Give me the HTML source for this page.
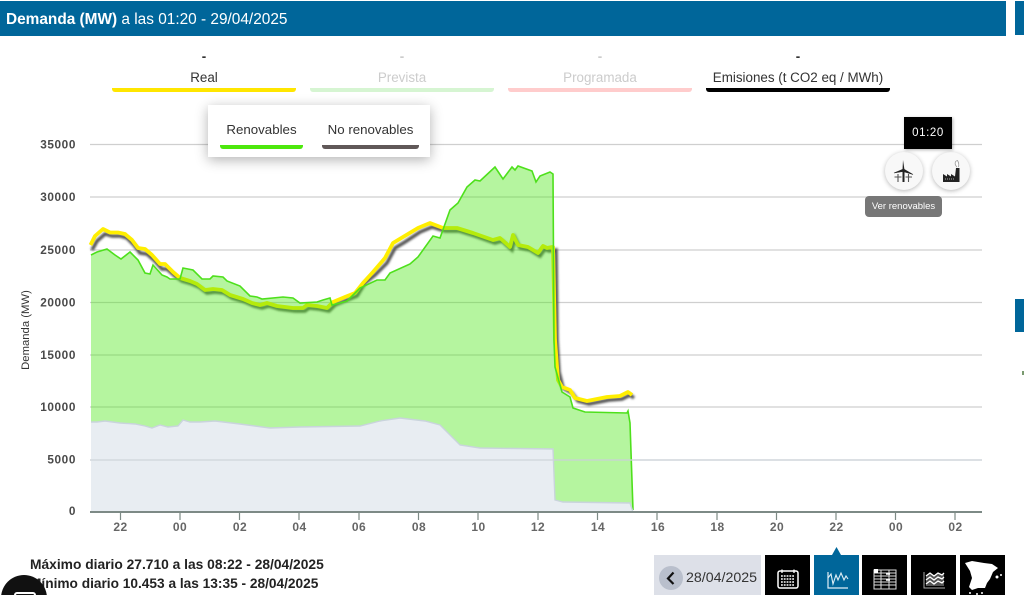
<!DOCTYPE html>
<html><head><meta charset="utf-8">
<style>
html,body{margin:0;padding:0;background:#fff;width:1024px;height:595px;overflow:hidden;font-family:"Liberation Sans",sans-serif}
#w{position:relative;width:1024px;height:595px;overflow:hidden;background:#fff}
.a{position:absolute}
.lg{position:absolute;text-align:center;font-size:13.4px;color:#333;top:70px;width:184px}
.bar{position:absolute;top:88px;height:3.5px;width:184px;border-radius:0 0 3px 3px}
.btn{position:absolute;top:555px;width:45px;height:40px;background:#000}
</style></head><body><div id="w">
<div class="a" style="left:0;top:1px;width:1006px;height:35px;background:#00669a;color:#fff;font-size:15.4px;line-height:37px;text-indent:6px;white-space:nowrap"><b>Demanda (MW)</b> a las 01:20 - 29/04/2025</div>
<div class="a" style="left:1015px;top:1px;width:9px;height:34px;background:#00669a"></div>
<div class="a" style="left:1015px;top:299px;width:9px;height:33px;background:#00669a"></div>
<div class="a" style="left:1022px;top:371px;width:2px;height:4px;background:#7a9a70"></div>

<div class="lg" style="left:112px;top:49px;color:#333;font-weight:bold">-</div>
<div class="lg" style="left:310px;top:49px;color:#ccc;font-weight:bold">-</div>
<div class="lg" style="left:508px;top:49px;color:#ccc;font-weight:bold">-</div>
<div class="lg" style="left:706px;top:49px;color:#333;font-weight:bold">-</div>
<div class="lg" style="left:112px">Real</div>
<div class="lg" style="left:310px;color:#ccc">Prevista</div>
<div class="lg" style="left:508px;color:#ccc">Programada</div>
<div class="lg" style="left:706px">Emisiones (t CO2 eq / MWh)</div>
<div class="bar" style="left:112px;background:#ffe600"></div>
<div class="bar" style="left:310px;background:#d6f5d2"></div>
<div class="bar" style="left:508px;background:#ffcccc"></div>
<div class="bar" style="left:706px;background:#000"></div>

<svg class="a" style="left:0;top:0" width="1024" height="595" viewBox="0 0 1024 595">
<defs><filter id="b" x="-5%" y="-5%" width="110%" height="110%"><feGaussianBlur stdDeviation="1"/></filter></defs>
<g stroke="#cfcfcf" stroke-width="1.3">
<line x1="90" x2="982" y1="144.5" y2="144.5"/><line x1="90" x2="982" y1="197" y2="197"/><line x1="90" x2="982" y1="250" y2="250"/><line x1="90" x2="982" y1="302.5" y2="302.5"/><line x1="90" x2="982" y1="355" y2="355"/><line x1="90" x2="982" y1="407" y2="407"/><line x1="90" x2="982" y1="460" y2="460"/>
</g>
<polyline filter="url(#b)" fill="none" stroke="#555" stroke-width="3.5" points="92,250 97,241 105,234 112,236 120,236 127,238 134,245 140,253 147,254 154,260 162,269 167,269 175,276 182,281 192,284 199,287 207,293 215,292 224,293 232,298 245,302 254,306 262,308 269,306 279,309 295,311 305,311 309,308 319,309 329,311 335,305 347,300 357,296 365,283 375,275 387,263 395,248 405,242 420,232 432,227 445,231 459,231 475,236 495,243 502,241 512,250 515,238 520,248 530,250 540,256 545,249 549,251 556,250 557,340 559,372 563,388 572,393 578,401 589,404 609,400 622,399 630,395 634,398"/>
<polyline fill="none" stroke="#ffee00" stroke-width="3.8" stroke-linejoin="round" points="90.5,245 95,236 103,229 110,232.5 118,232.5 125,234 132,240 138,248 145,249 152,255 160,264 165,264 173,272 180,278 190,281 197,284 205,290 213,289 222,290 230,295 243,299 252,303 260,305 267,303 277,306 293,308 303,308 307,305 317,306 327,308 333,302 345,297 355,293 363,283 373,272 385,258 393,243 403,237 418,228 430,223 443,228 457,228 473,233 493,240 500,238 510,247 513,235 518,245 528,247 538,253 543,246 547,248 552,247 553,247 555,340 558,380 562,387 570,390 575,398 587,401 607,397 620,396 628,392 632,395"/>
<path fill="#4ee81a" fill-opacity=".42" d="M91,255 97,252 107,249 115,255 121,259 130,252 138,260 145,273 150,274 153,265 162,275 167,277 170,279 180,279 183,268 193,270 202,279 210,279 213,276 223,277 227,281 240,286 250,296 257,297 262,299 283,297 293,298 300,303 317,302 323,300 330,298 332,305 347,301 360,288 377,280 385,280 390,273 410,264 418,257 433,236 440,238 450,210 458,203 467,187 475,180 480,181 495,167 503,179 512,167 515,170 518,166 532,171 536,182 540,176 550,172 553,174 554,340 555,367 562,392 570,397 573,408 585,412 627,413 628,411 630,423 633,510 633,512 91,512Z"/>
<polyline fill="none" stroke="#4ee01c" stroke-width="1.6" points="91,255 97,252 107,249 115,255 121,259 130,252 138,260 145,273 150,274 153,265 162,275 167,277 170,279 180,279 183,268 193,270 202,279 210,279 213,276 223,277 227,281 240,286 250,296 257,297 262,299 283,297 293,298 300,303 317,302 323,300 330,298 332,305 347,301 360,288 377,280 385,280 390,273 410,264 418,257 433,236 440,238 450,210 458,203 467,187 475,180 480,181 495,167 503,179 512,167 515,170 518,166 532,171 536,182 540,176 550,172 553,174 554,340 555,367 562,392 570,397 573,408 585,412 627,413 628,411 630,423 633,510"/>
<path fill="#e8edf2" stroke="none" d="M91,422 97,422 105,421 120,423 135,424 145,426 152,428 160,425 168,427 178,426 183,420 190,422 200,422 215,421 240,424 270,428 300,427 360,426 380,421 400,418 425,421 440,425 450,435 460,445 480,448 553,449 555,500 563,502 630,503 633,512 91,512Z"/>
<polyline fill="none" stroke="#c9d4dc" stroke-width="1.4" points="91,422 97,422 105,421 120,423 135,424 145,426 152,428 160,425 168,427 178,426 183,420 190,422 200,422 215,421 240,424 270,428 300,427 360,426 380,421 400,418 425,421 440,425 450,435 460,445 480,448 553,449 555,500 563,502 630,503 633,512"/>
<line x1="90" x2="982" y1="460" y2="460" stroke="#cfd5da" stroke-width="1.2"/>
<line x1="90" x2="982" y1="512" y2="512" stroke="#7d8a86" stroke-width="2"/>
<g stroke="#7d8a86" stroke-width="1.2">
<line x1="120.5" x2="120.5" y1="512" y2="520"/><line x1="180" x2="180" y1="512" y2="520"/><line x1="239.5" x2="239.5" y1="512" y2="520"/><line x1="299" x2="299" y1="512" y2="520"/><line x1="359" x2="359" y1="512" y2="520"/><line x1="418.5" x2="418.5" y1="512" y2="520"/><line x1="478" x2="478" y1="512" y2="520"/><line x1="538" x2="538" y1="512" y2="520"/><line x1="597.5" x2="597.5" y1="512" y2="520"/><line x1="657" x2="657" y1="512" y2="520"/><line x1="717" x2="717" y1="512" y2="520"/><line x1="776.5" x2="776.5" y1="512" y2="520"/><line x1="836" x2="836" y1="512" y2="520"/><line x1="895.500" x2="895.500" y1="512" y2="520"/><line x1="955" x2="955" y1="512" y2="520"/>
</g>
<g font-family="Liberation Sans" font-weight="bold" font-size="11.8" letter-spacing=".6" fill="#4a4a4a" text-anchor="end">
<text x="76" y="148.500">35000</text><text x="76" y="201">30000</text><text x="76" y="254">25000</text><text x="76" y="306.500">20000</text><text x="76" y="359">15000</text><text x="76" y="411">10000</text><text x="76" y="463.500">5000</text><text x="76" y="515">0</text>
</g>
<g font-family="Liberation Sans" font-weight="bold" font-size="12" letter-spacing=".5" fill="#666" text-anchor="middle">
<text x="120.500" y="531">22</text><text x="180" y="531">00</text><text x="240" y="531">02</text><text x="299.500" y="531">04</text><text x="359" y="531">06</text><text x="419" y="531">08</text><text x="478.500" y="531">10</text><text x="538" y="531">12</text><text x="598" y="531">14</text><text x="658" y="531">16</text><text x="717.500" y="531">18</text><text x="777" y="531">20</text><text x="836.500" y="531">22</text><text x="896" y="531">00</text><text x="955.500" y="531">02</text>
</g>
<text transform="translate(29,330) rotate(-90)" font-family="Liberation Sans" font-size="11.3" fill="#333" text-anchor="middle">Demanda (MW)</text>
</svg>

<div class="a" style="left:208px;top:105px;width:222px;height:52px;background:#fff;box-shadow:0 3px 12px rgba(0,0,0,.3)"></div>
<div class="a" style="left:220px;top:122px;width:83px;text-align:center;font-size:13.3px;color:#333;white-space:nowrap">Renovables</div>
<div class="a" style="left:322px;top:122px;width:97px;text-align:center;font-size:13.3px;color:#333;white-space:nowrap">No renovables</div>
<div class="a" style="left:220px;top:145px;width:83px;height:3.5px;background:#4de80d;border-radius:0 0 3px 3px"></div>
<div class="a" style="left:322px;top:145px;width:97px;height:3.5px;background:#605858;border-radius:0 0 3px 3px"></div>

<div class="a" style="left:885px;top:152px;width:38px;height:38px;border-radius:50%;background:#f8f8f8;box-shadow:0 1px 5px rgba(0,0,0,.28)"></div>
<div class="a" style="left:932px;top:152px;width:38px;height:38px;border-radius:50%;background:#f8f8f8;box-shadow:0 1px 5px rgba(0,0,0,.28)"></div>
<div class="a" style="left:904px;top:117px;width:48px;height:32px;background:#000;color:#fff;font-size:11.5px;line-height:32px;text-align:center;letter-spacing:.6px;box-shadow:1px 1px 3px rgba(0,0,0,.3)">01:20</div>
<svg class="a" style="left:885px;top:152px" width="85" height="38" viewBox="885 152 85 38">
<path d="M903 160 904.500 170 904.500 182 902.500 182 902.500 170Z" fill="#222"/>
<path d="M903.500 169 894 173 903 171.500 913 174.500Z" fill="#222" stroke="#222" stroke-width=".6"/>
<path d="M898 174V182M894.500 177H901.500M908.500 174V182M905.500 177H912" stroke="#555" stroke-width="1.100" fill="none"/>
<path d="M943 182V174L947 176.500V174L951 176.500V174L955 176.500 956 168H959.500V182Z" fill="#222"/>
<path d="M957 167C954 164 955 161 957.500 160.500 959 163 959 165 958.500 167" fill="#fff" stroke="#999" stroke-width=".8"/>
<path d="M945 179H955" stroke="#aaa" stroke-width="1" stroke-dasharray="1 1"/>
</svg>
<div class="a" style="left:865px;top:196px;width:77px;height:21px;background:#777;border-radius:4px;color:#fff;font-size:9.5px;line-height:21px;text-align:center;white-space:nowrap">Ver renovables</div>

<div class="a" style="left:30px;top:557px;font-size:13.8px;font-weight:bold;color:#222;white-space:nowrap">Máximo diario 27.710 a las 08:22 - 28/04/2025</div>
<div class="a" style="left:30px;top:576px;font-size:13.7px;font-weight:bold;color:#222;white-space:nowrap">Mínimo diario 10.453 a las 13:35 - 28/04/2025</div>
<div class="a" style="left:1px;top:575px;width:46px;height:46px;border-radius:50%;background:#111"></div>
<div class="a" style="left:14px;top:592px;width:22px;height:8px;border:2px solid #fff;border-radius:3px;box-sizing:border-box"></div>

<div class="a" style="left:654px;top:555px;width:107px;height:40px;background:#dde0e8"></div>
<div class="a" style="left:659px;top:566px;width:24px;height:24px;border-radius:50%;background:#b9bfcc"></div>
<svg class="a" style="left:659px;top:566px" width="24" height="24"><path d="M14.500 6.500 9 12.500 14.500 18" fill="none" stroke="#111" stroke-width="2.200"/></svg>
<div class="a" style="left:686px;top:570px;font-size:14.200px;color:#333;white-space:nowrap">28/04/2025</div>

<div class="btn" style="left:765px"></div>
<div class="btn" style="left:814px;background:#00669a"></div>
<div class="btn" style="left:862px"></div>
<div class="btn" style="left:911px"></div>
<div class="btn" style="left:960px"></div>
<svg class="a" style="left:760px;top:545px" width="264" height="50" viewBox="760 545 264 50">
<path d="M836.500 547 841 555H832Z" fill="#00669a"/>
<rect x="778" y="571" width="20" height="17" rx="2" fill="none" stroke="#fff" stroke-width="1.500"/>
<path d="M782 569.500V573M794 569.500V573" stroke="#fff" stroke-width="1.300"/>
<path d="M781 576H795M781 579H795M781 582H795M781 585H795" stroke="#fff" stroke-width="1.600" stroke-dasharray="1.800 1"/>
<path d="M828 572V588H848" fill="none" stroke="#dfeef6" stroke-width="1.200"/>
<path d="M828 578 831 574 833 584 836 575 838 580 841 573 844 580 846 576 848 579" fill="none" stroke="#dfeef6" stroke-width="1.100"/>
<rect x="874" y="570" width="22" height="19" fill="none" stroke="#ddd" stroke-width="1"/>
<path d="M874 573H896M874 576H896M874 579H896M874 582H896M874 585H896M881 570V589M889 570V589" stroke="#ddd" stroke-width="1"/>
<rect x="874" y="569" width="4" height="4" fill="#fff"/>
<path d="M886 574h4M886 580h4" stroke="#fff" stroke-width="1.500"/>
<path d="M924 572V588H945" fill="none" stroke="#aaa" stroke-width="1"/>
<path d="M926 576 930 573 934 576 938 573 942 575 944 573V586H926Z" fill="#555"/>
<path d="M926 576 930 573 934 576 938 573 942 575 944 573M926 580 930 577 934 580 938 577 942 579 944 577M926 584 930 581 934 584 938 581 942 583 944 581" fill="none" stroke="#fff" stroke-width="1.300"/>
<path d="M965 563 972 561 984 563 992 564 998 568 993 572 990 579 987 583 985 588 978 588 972 590 969 587 972 578 970 571Z" fill="#fff"/>
<circle cx="997" cy="577" r="1.500" fill="#fff"/><circle cx="1001" cy="575" r="1" fill="#fff"/><circle cx="970" cy="593" r="1" fill="#fff"/><circle cx="977" cy="594" r="1" fill="#fff"/><circle cx="982" cy="593" r="1" fill="#fff"/>
</svg>
</div></body></html>
